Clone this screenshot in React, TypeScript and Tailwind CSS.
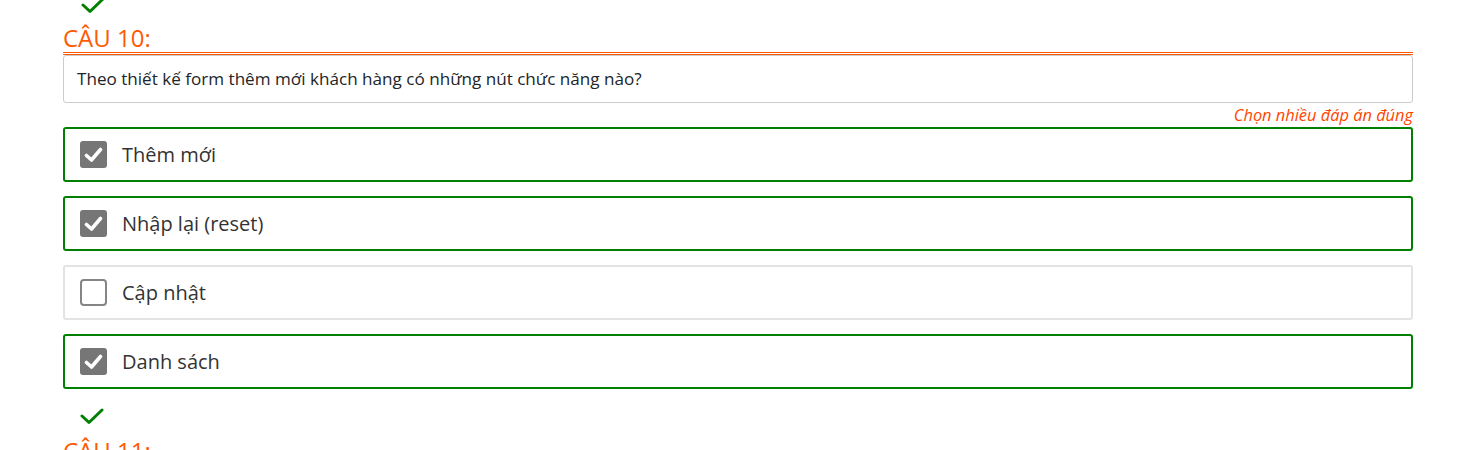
import * as React from "react";

interface Option {
  label: string;
  checked: boolean;
}

const options: Option[] = [
  { label: "Thêm mới", checked: true },
  { label: "Nhập lại (reset)", checked: true },
  { label: "Cập nhật", checked: false },
  { label: "Danh sách", checked: true },
];

const GreenTick = () => (
  <svg width="24" height="17" viewBox="0 0 24 17" className="block">
    <polyline
      points="2,8 9,14.5 22,2"
      fill="none"
      stroke="#008000"
      strokeWidth="3"
      strokeLinecap="round"
      strokeLinejoin="round"
    />
  </svg>
);

const Box = ({ checked }: { checked: boolean }) =>
  checked ? (
    <span className="flex h-[27px] w-[27px] shrink-0 items-center justify-center rounded-[3px] bg-[#767676]">
      <svg width="19" height="16" viewBox="0 0 19 16">
        <polyline
          points="2.5,8.5 7.5,13 16.5,2.5"
          fill="none"
          stroke="#fff"
          strokeWidth="3.6"
          strokeLinecap="round"
          strokeLinejoin="round"
        />
      </svg>
    </span>
  ) : (
    <span className="block h-[27px] w-[27px] shrink-0 rounded-[4px] border-2 border-[#858585] bg-white" />
  );

const App: React.FC = () => {
  return (
    <div className="h-[450px] overflow-hidden bg-white font-['Open_Sans',sans-serif]">
      <div className="mx-[63px] w-[1350px]">
        {/* end of previous question */}
        <div className="-mt-[3px] pl-[18px]">
          <GreenTick />
        </div>

        <h3 className="mt-[10px] text-[24px] leading-[28px] text-[#ff5a00]">CÂU 10:</h3>
        <div className="flex flex-col gap-px">
          <div className="h-px bg-[#ff5a00]" />
          <div className="h-px bg-[#ff5a00]" />
        </div>
        <div className="rounded-[3px] border border-[#cccccc] px-[13px] py-[12px] text-[17.1px] leading-[22px] text-[#212529]">
          Theo thiết kế form thêm mới khách hàng có những nút chức năng nào?
        </div>
        <p className="text-right text-[16.4px] italic leading-[24px] text-[#ff4500]">
          Chọn nhiều đáp án đúng
        </p>

        <div className="flex flex-col gap-[14px]">
          {options.map((o) => (
            <div
              key={o.label}
              className={`flex h-[55px] items-center gap-[15px] rounded-[3px] border-2 px-[15px] ${
                o.checked ? "border-[#008000]" : "border-[#e3e3e3]"
              }`}
            >
              <Box checked={o.checked} />
              <span className="text-[20px] text-[#333333]">{o.label}</span>
            </div>
          ))}
        </div>

        <div className="mt-[19px] pl-[17px]">
          <GreenTick />
        </div>
        <h3 className="mt-[12px] text-[24px] leading-[28px] text-[#ff5a00]">CÂU 11:</h3>
      </div>
    </div>
  );
};

export default App;
